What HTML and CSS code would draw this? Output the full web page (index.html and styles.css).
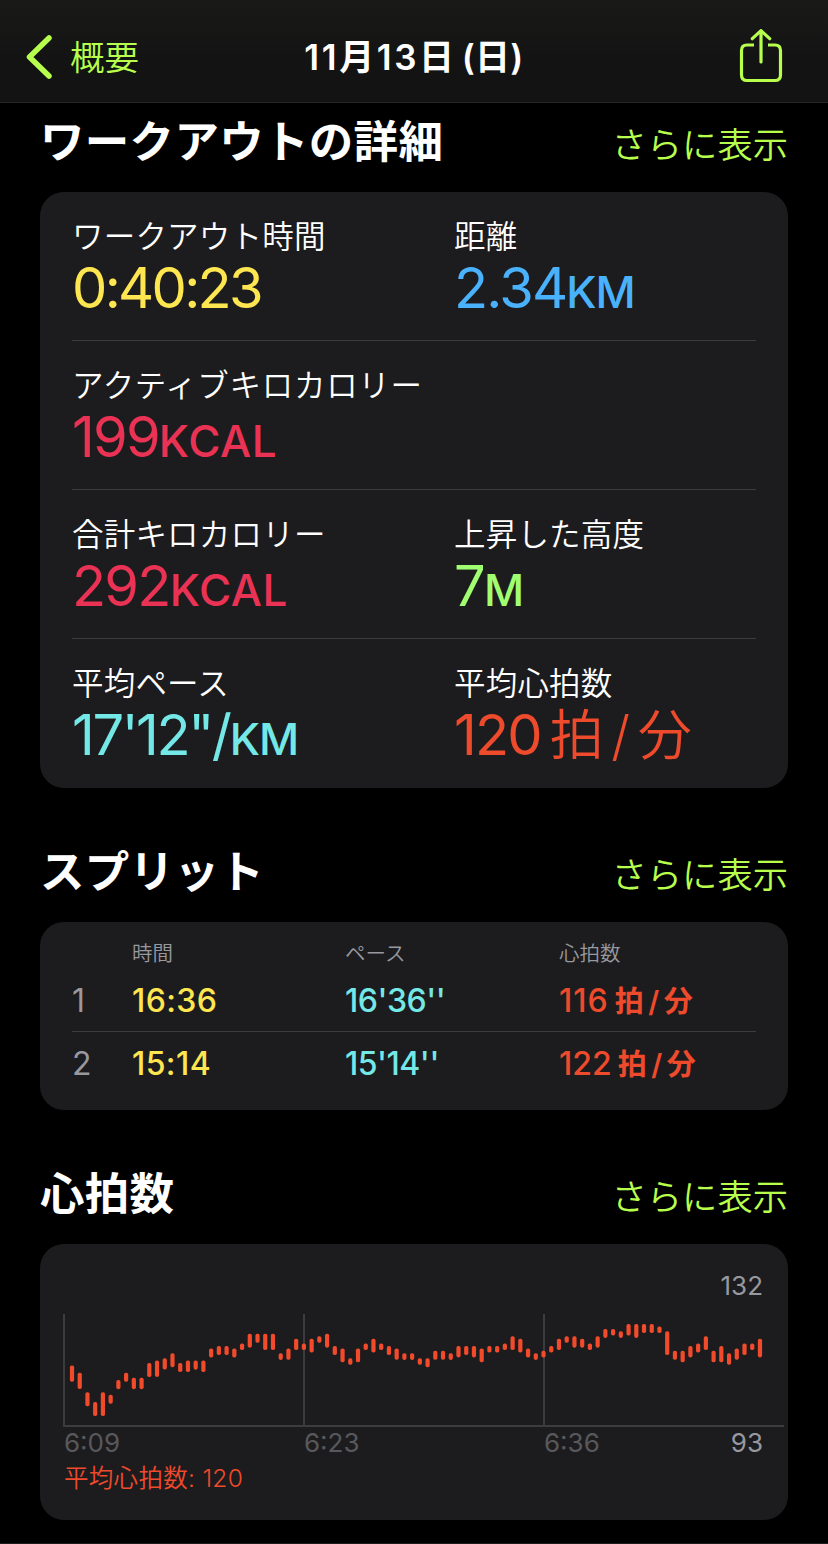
FILE: index.html
```html
<!DOCTYPE html>
<html lang="ja">
<head>
    <meta charset="UTF-8">
    <meta name="viewport" content="width=device-width, initial-scale=1.0">
    <title>ワークアウトの詳細</title>
    <link rel="stylesheet" href="styles.css">
</head>
<body>
    <!-- ナビゲーションバー -->
    <header class="navbar">
        <a href="#" class="back">
            <svg width="28" height="44" viewBox="0 0 28 44" fill="none" stroke="currentColor" stroke-width="5.5" stroke-linecap="round" stroke-linejoin="round">
                <path d="M24 3 L4.5 22 L24 41"/>
            </svg>
            <span>概要</span>
        </a>
        <h1 class="nav-title">11月13日<span class="weekday">(日)</span></h1>
        <a href="#" class="share">
            <svg width="44" height="56" viewBox="0 0 44 56" fill="none" stroke="currentColor" stroke-width="3.2" stroke-linecap="round" stroke-linejoin="round">
                <path stroke-linecap="butt" d="M15 16 H8 Q2.5 16 2.5 21.5 V46 Q2.5 51.5 8 51.5 H36 Q41.5 51.5 41.5 46 V21.5 Q41.5 16 36 16 H29"/>
                <path d="M22 33 V2 M13.3 9.7 L22 1.6 L30.7 9.7"/>
            </svg>
        </a>
    </header>

    <main>
        <!-- ワークアウトの詳細 -->
        <section>
            <div class="section-head first">
                <h2>ワークアウトの詳細</h2>
                <a href="#">さらに表示</a>
            </div>
            <div class="card details">
                <div class="row">
                    <div class="metric">
                        <div class="label">ワークアウト時間</div>
                        <div class="value yellow duration">0:40:23</div>
                    </div>
                    <div class="metric">
                        <div class="label">距離</div>
                        <div class="value blue">2.34<span class="unit">KM</span></div>
                    </div>
                </div>
                <div class="row">
                    <div class="metric">
                        <div class="label wide">アクティブキロカロリー</div>
                        <div class="value pink energy">199<span class="unit">KCAL</span></div>
                    </div>
                </div>
                <div class="row">
                    <div class="metric">
                        <div class="label">合計キロカロリー</div>
                        <div class="value pink energy">292<span class="unit">KCAL</span></div>
                    </div>
                    <div class="metric">
                        <div class="label">上昇した高度</div>
                        <div class="value green">7<span class="unit">M</span></div>
                    </div>
                </div>
                <div class="row">
                    <div class="metric">
                        <div class="label">平均ペース</div>
                        <div class="value cyan pace">17'12"/<span class="unit">KM</span></div>
                    </div>
                    <div class="metric">
                        <div class="label">平均心拍数</div>
                        <div class="value red">120<span class="bpm">拍<i>/</i>分</span></div>
                    </div>
                </div>
            </div>
        </section>

        <!-- スプリット -->
        <section>
            <div class="section-head">
                <h2>スプリット</h2>
                <a href="#">さらに表示</a>
            </div>
            <div class="card splits">
                <div class="split split-head">
                    <span></span><span>時間</span><span>ペース</span><span>心拍数</span>
                </div>
                <div class="split">
                    <span class="num">1</span>
                    <span class="yellow">16:36</span>
                    <span class="cyan split-pace">16'36''</span>
                    <span class="red"><span class="ones">116</span><span class="bpm">拍<i>/</i>分</span></span>
                </div>
                <div class="split">
                    <span class="num">2</span>
                    <span class="yellow">15:14</span>
                    <span class="cyan split-pace">15'14''</span>
                    <span class="red">122<span class="bpm">拍<i>/</i>分</span></span>
                </div>
            </div>
        </section>

        <!-- 心拍数 -->
        <section>
            <div class="section-head">
                <h2>心拍数</h2>
                <a href="#">さらに表示</a>
            </div>
            <div class="card heart">
                <div class="max">132</div>
                <svg class="chart" id="chart" width="721" height="113" viewBox="0 0 721 113">
                    <path class="grid" d="M1 0 V112 M241 0 V112 M481 0 V112 M0 112 H721"/>
                </svg>
                <div class="axis">
                    <span>6:09</span><span>6:23</span><span>6:36</span><span class="min">93</span>
                </div>
                <div class="average red">平均心拍数: 120</div>
            </div>
        </section>
    </main>

    <script>
        // 心拍数の範囲: [上端の段, 長さの段]
        const ranges = [
            [17,4],[20,4],[28,3],[32,3],[28,7],[29,1],[23,1],[20,1],[22,2],[22,2],
            [16,3],[15,4],[14,2],[12,3],[16,1],[15,2],[15,1],[15,2],[10,1],[9,1],
            [9,1],[10,1],[8,0],[4,3],[4,1],[4,4],[4,4],[12,0],[10,2],[6,2],
            [8,0],[6,3],[5,0],[4,3],[9,1],[10,3],[14,0],[10,3],[8,0],[6,3],
            [8,0],[9,1],[10,2],[12,0],[12,0],[14,0],[14,1],[11,1],[11,1],[12,0],
            [9,2],[9,1],[9,2],[10,3],[9,0],[9,0],[8,0],[5,3],[6,3],[10,1],
            [12,0],[11,0],[9,0],[6,2],[5,0],[5,2],[6,1],[8,0],[5,2],[2,1],
            [2,0],[3,0],[0,2],[0,3],[0,1],[0,1],[1,0],[3,7],[11,1],[11,2],
            [9,2],[8,1],[5,3],[11,2],[9,4],[12,2],[10,2],[8,2],[8,0],[6,5]
        ];
        const chart = document.getElementById('chart');
        ranges.forEach(([top, len], i) => {
            const bar = document.createElementNS('http://www.w3.org/2000/svg', 'rect');
            bar.setAttribute('class', 'bar');
            bar.setAttribute('x', 6.9 + i * 7.73);
            bar.setAttribute('y', 10 + top * 2.44);
            bar.setAttribute('width', 4.2);
            bar.setAttribute('height', 6.6 + len * 2.43);
            bar.setAttribute('rx', 1.8);
            chart.appendChild(bar);
        });
    </script>
</body>
</html>
```

FILE: styles.css
```css
* { box-sizing: border-box; }
body {
    margin: 0; min-height: 1544px; background: #000; color: #fff;
    font-family: Inter, "Noto Sans CJK JP", sans-serif;
    border-bottom: 1px solid #1c1c1e;
}
a { color: #b8fe4c; text-decoration: none; }
h1, h2 { margin: 0; }
svg { display: block; }
i { font-style: normal; }

/* ナビゲーションバー */
.navbar {
    display: grid; grid-template-columns: 1fr auto 1fr; align-items: center;
    height: 103px; padding: 11px 25px 0;
    background: linear-gradient(#191a18, #131313 60%);
    border-bottom: 1px solid #262626;
}
.back { display: flex; align-items: center; gap: 17px; font-size: 34.5px; font-weight: 350; line-height: 44px; }
.back span { padding-top: 2px; }
.nav-title { font-size: 35px; font-weight: 600; line-height: 44px; letter-spacing: 2.6px; padding-top: 1px; }
.weekday { margin-left: 5px; letter-spacing: 0.3px; }
.share { justify-self: end; margin-right: 20px; }

/* 見出し */
main { padding: 0 40px; }
.section-head {
    display: flex; justify-content: space-between; align-items: flex-end;
    padding: 54px 0 20px;
}
.section-head.first { padding-top: 9px; }
.section-head h2 { font-size: 44.5px; font-weight: 700; line-height: 60px; letter-spacing: 0.3px; }
.section-head a { font-size: 35.3px; font-weight: 350; line-height: 52px; }

.card { background: #1c1c1e; border-radius: 24px; }

/* 色 */
.yellow { color: #fee650; }
.blue { color: #4ab2fd; }
.pink { color: #ea3354; }
.green { color: #a0fe70; }
.cyan { color: #74e8e6; }
.red { color: #ee4a2c; }

/* 詳細 */
.details { padding: 0 32px; }
.row {
    display: grid; grid-template-columns: 382px 1fr;
    height: 149px; padding-top: 27px; border-bottom: 1px solid #3c3c3e;
}
.row:last-child { border-bottom: none; }
.label { font-size: 31.5px; font-weight: 350; line-height: 36px; letter-spacing: 0.2px; white-space: nowrap; }
.label.wide { letter-spacing: 0.7px; }
.value { font-size: 56px; font-weight: 400; line-height: 66px; letter-spacing: -1.8px; white-space: nowrap; }
.value.duration { letter-spacing: -2.7px; }
.value.energy { letter-spacing: -1.8px; }
.value.pace { letter-spacing: -2.4px; }
.unit { font-size: 44px; font-weight: 450; line-height: 1; letter-spacing: -1px; }
.energy .unit { letter-spacing: 0.6px; }
.value .bpm { font-size: 54px; font-weight: 350; line-height: 1; margin-left: 9px; letter-spacing: 0; }
.value .bpm i { margin: 0 7.5px; }

/* スプリット */
.splits { padding: 16px 32px 17px; }
.split {
    display: grid; grid-template-columns: 60px 213px 214px 1fr;
    height: 64px; line-height: 66px; font-size: 32px; font-weight: 500;
    border-bottom: 1px solid #3c3c3e; white-space: nowrap;
}
.split:last-child { height: 61px; line-height: 63px; border-bottom: none; }
.split-head {
    height: 30px; line-height: 32px; font-size: 20.5px; font-weight: 350;
    color: #98989f; border-bottom: none;
}
.num { color: #98989f; font-weight: 400; }
.split .yellow { letter-spacing: 0.4px; }
.split-pace { letter-spacing: -0.5px; }
.ones { letter-spacing: 1px; }
.split .bpm { font-size: 29px; font-weight: 600; margin-left: 6px; }
.split .bpm i { margin: 0 4.5px; }

/* 心拍数 */
.heart { height: 276px; padding: 26px 4px 0 23px; }
.max { font-size: 26px; line-height: 32px; color: #98989f; text-align: right; padding-right: 21px; }
.chart { margin-top: 12px; }
.grid { stroke: #3c3c3e; stroke-width: 2; fill: none; }
.bar { fill: #f24b2c; }
.axis {
    display: grid; grid-template-columns: 240px 240px 1fr auto;
    padding: 0 21px 0 1px; font-size: 26px; line-height: 32px; color: #58585c;
}
.axis .min { color: #98989f; }
.average { padding-left: 1px; margin-top: 3px; font-size: 24.5px; font-weight: 350; line-height: 32px; letter-spacing: 0.3px; }
```
